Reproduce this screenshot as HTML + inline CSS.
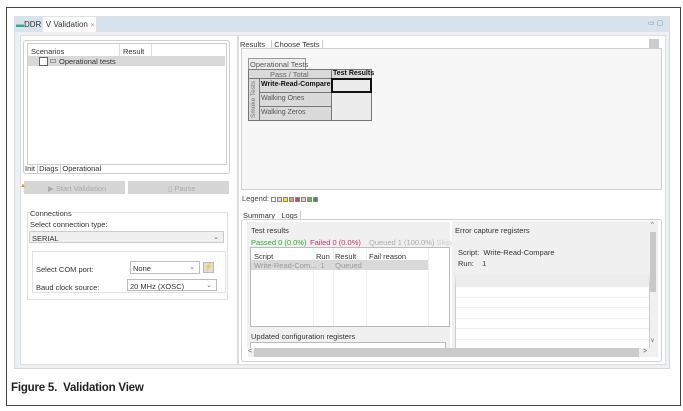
<!DOCTYPE html>
<html><head><meta charset="utf-8"><style>
*{margin:0;padding:0;box-sizing:border-box}
body{width:683px;height:411px;background:#fff;font-family:"Liberation Sans",sans-serif;font-size:7.5px;color:#333;position:relative;overflow:hidden}
div,span{position:absolute}
.b{border:1px solid #cfcfcf}
.t{white-space:nowrap}
.combo{background:#fff;border:1px solid #bdbdbd}
.arr{right:4px;top:1px;font-size:7px;color:#666}
.sq{position:static;display:inline-block;width:5px;height:5px;border:1px solid #888;margin-right:1px;vertical-align:middle}
</style></head><body>
<div style="left:6px;top:7px;width:675px;height:399px;border:1.5px solid #444"></div>
<div style="left:14px;top:16px;width:656px;height:353px;background:#eef1f4;border:1px solid #d8d8d8"></div>
<div style="left:14px;top:16px;width:656px;height:16px;background:#d9e3ee"></div>
<div style="left:43px;top:17px;width:53px;height:15px;background:#fff"></div>
<div class="t" style="left:16px;top:20px;font-size:8px;color:#333"><span style="position:static;color:#3a8;">▬</span>DDR&nbsp;&nbsp;V Validation <span style="position:static;color:#999;font-size:6px">✕</span></div>
<div class="t" style="left:648px;top:19px;color:#888;font-size:7px">▭ ▢</div>
<!-- left panel -->
<div style="left:20px;top:35px;width:218px;height:330px;background:#fff;border:1px solid #ddd"></div>
<div class="b" style="left:23px;top:40px;width:207px;height:134px;border-radius:3px;background:#fff"></div>
<div class="b" style="left:27px;top:43px;width:200px;height:122px;background:#fff"></div>
<div style="left:119px;top:44px;width:1px;height:12px;background:#ddd"></div>
<div style="left:151px;top:44px;width:1px;height:12px;background:#ddd"></div>
<div class="t" style="left:31px;top:47px">Scenarios</div>
<div class="t" style="left:123px;top:47px">Result</div>
<div style="left:28px;top:56px;width:197px;height:10px;background:#d9d9d9"></div>
<div style="left:39px;top:57px;width:9px;height:9px;background:#fff;border:1px solid #666"></div>
<div style="left:50px;top:59px;width:6px;height:4px;border:1px solid #999"></div>
<div class="t" style="left:59px;top:57px">Operational tests</div>
<div class="t" style="left:25px;top:164px;font-size:7.5px">Init <span style="position:static;border-left:1px solid #ccc;padding-left:1px">Diags</span> <span style="position:static;border-left:1px solid #ccc;padding-left:1px">Operational</span></div>
<div style="left:24px;top:181px;width:101px;height:13px;background:#d6d6d6"></div>
<div style="left:128px;top:181px;width:101px;height:13px;background:#d6d6d6"></div>
<div class="t" style="left:20px;top:183px;color:#d49a2a;font-size:6px">▲</div>
<div class="t" style="left:48px;top:184px;color:#aaa">▶ Start Validation</div>
<div class="t" style="left:168px;top:184px;color:#aaa">▯ Pause</div>
<div style="left:27px;top:212px;width:201px;height:88px;border:1px solid #e2e2e2"></div>
<div class="t" style="left:30px;top:209px;background:#fff">Connections</div>
<div class="t" style="left:30px;top:220px">Select connection type:</div>
<div style="left:29px;top:231px;width:195px;height:12px;background:#f0f0f0;border:1px solid #ccc"><span class="t" style="left:2px;top:2px">SERIAL</span><span class="arr">⌄</span></div>
<div style="left:32px;top:251px;width:194px;height:42px;border:1px solid #e2e2e2"></div>
<div class="t" style="left:36px;top:265px">Select COM port:</div>
<div class="combo" style="left:130px;top:261px;width:70px;height:13px"><span class="t" style="left:2px;top:2px">None</span><span class="arr">⌄</span></div>
<div style="left:203px;top:262px;width:11px;height:11px;background:#ddd;border:1px solid #bbb;color:#c9a000;font-size:7px;text-align:center">⚡</div>
<div class="t" style="left:36px;top:283px">Baud clock source:</div>
<div class="combo" style="left:127px;top:279px;width:90px;height:12px"><span class="t" style="left:2px;top:2px">20 MHz (XOSC)</span><span class="arr">⌄</span></div>
<!-- right panel -->
<div style="left:238px;top:35px;width:428px;height:330px;background:#fff;border:1px solid #ddd"></div>
<div class="t" style="left:240px;top:40px;font-size:7.5px">Results&nbsp;&nbsp;&nbsp;<span style="position:static;border-left:1px solid #ccc;padding-left:2px;border-right:1px solid #ccc;padding-right:2px">Choose Tests</span></div>
<div class="b" style="left:241px;top:48px;width:421px;height:142px;background:#f7f7f7"></div>
<div style="left:649px;top:39px;width:10px;height:9px;background:#ccc"></div>
<div style="left:248px;top:58px;width:58px;height:11px;background:#ececec;border:1px solid #999;border-bottom:none"></div>
<div class="t" style="left:250px;top:60px;color:#555">Operational Tests</div>
<div style="left:248px;top:69px;width:124px;height:52px;background:#dadada;border:1px solid #777"></div>
<div style="left:248px;top:78px;width:124px;height:1px;background:#777"></div>
<div style="left:331px;top:69px;width:1px;height:52px;background:#777"></div>
<div style="left:259px;top:78px;width:1px;height:43px;background:#777"></div>
<div style="left:259px;top:92px;width:113px;height:1px;background:#777"></div>
<div style="left:259px;top:106px;width:113px;height:1px;background:#777"></div>
<div style="left:332px;top:79px;width:39px;height:41px;background:#ececec"></div>
<div style="left:331px;top:78px;width:41px;height:15px;border:2px solid #111"></div>
<div class="t" style="left:270px;top:70px;color:#666">Pass / Total</div>
<div class="t" style="left:333px;top:70px;font-weight:bold;color:#111;font-size:7px">Test Results</div>
<div class="t" style="left:261px;top:81px;font-weight:bold;color:#111;font-size:7px">Write-Read-Compare</div>
<div class="t" style="left:261px;top:95px;color:#555;font-size:7px">Walking Ones</div>
<div class="t" style="left:261px;top:109px;color:#555;font-size:7px">Walking Zeros</div>
<div class="t" style="left:250px;top:118px;transform:rotate(-90deg);transform-origin:0 0;color:#777;font-size:6.5px">Smoke Tests</div>
<div class="t" style="left:242px;top:194px;color:#444">Legend: <span class="sq" style="background:#fff"></span><span class="sq" style="background:#ddd"></span><span class="sq" style="background:#ee0"></span><span class="sq" style="background:#e96"></span><span class="sq" style="background:#d44"></span><span class="sq" style="background:#cdc"></span><span class="sq" style="background:#5c3"></span><span class="sq" style="background:#585"></span></div>
<div class="t" style="left:243px;top:211px">Summary&nbsp;&nbsp;&nbsp;<span style="position:static;border-right:1px solid #ccc;padding-right:2px">Logs</span></div>
<div class="b" style="left:241px;top:219px;width:421px;height:143px;border-radius:3px;background:#fff"></div>
<div style="left:247px;top:222px;width:203px;height:126px;background:#f0f0f0"></div>
<div class="t" style="left:251px;top:226px">Test results</div>
<div class="t" style="left:251px;top:238px;color:#3a3">Passed 0 (0.0%)</div>
<div class="t" style="left:310px;top:238px;color:#c36">Failed 0 (0.0%)</div>
<div class="t" style="left:369px;top:238px;color:#aaa">Queued 1 (100.0%) <span style="position:static;color:#ccc">Skipp</span></div>
<div style="left:250px;top:247px;width:200px;height:80px;background:#fff;border:1px solid #bbb"></div>
<div style="left:313px;top:248px;width:1px;height:78px;background:#eee"></div>
<div style="left:333px;top:248px;width:1px;height:78px;background:#eee"></div>
<div style="left:366px;top:248px;width:1px;height:78px;background:#eee"></div>
<div style="left:428px;top:248px;width:1px;height:78px;background:#eee"></div>
<div class="t" style="left:254px;top:252px">Script</div>
<div class="t" style="left:316px;top:252px">Run</div>
<div class="t" style="left:335px;top:252px">Result</div>
<div class="t" style="left:369px;top:252px">Fail reason</div>
<div style="left:251px;top:260px;width:177px;height:10px;background:#d9d9d9"></div>
<div class="t" style="left:254px;top:261px;color:#999">Write-Read-Com...&nbsp;&nbsp;1&nbsp;&nbsp;&nbsp;&nbsp;&nbsp;Queued</div>
<div class="t" style="left:251px;top:332px">Updated configuration registers</div>
<div style="left:250px;top:342px;width:196px;height:8px;background:#fff;border:1px solid #bbb"></div>
<div style="left:452px;top:221px;width:206px;height:136px;background:#f0f0f0"></div>
<div class="t" style="left:455px;top:226px">Error capture registers</div>
<div class="t" style="left:458px;top:248px">Script:&nbsp; Write-Read-Compare</div>
<div class="t" style="left:458px;top:259px">Run:&nbsp;&nbsp;&nbsp; 1</div>
<div style="left:455px;top:274px;width:195px;height:75px;background:#fff;border:1px solid #ccc;border-top:13px solid #ececec"></div>
<div style="left:456px;top:297px;width:193px;height:1px;background:#eee"></div>
<div style="left:456px;top:307px;width:193px;height:1px;background:#eee"></div>
<div style="left:456px;top:318px;width:193px;height:1px;background:#eee"></div>
<div style="left:456px;top:328px;width:193px;height:1px;background:#eee"></div>
<div style="left:456px;top:339px;width:193px;height:1px;background:#eee"></div>
<div style="left:650px;top:232px;width:6px;height:60px;background:#c8c8c8"></div>
<div class="t" style="left:651px;top:222px;color:#666;font-size:6px">^</div>
<div class="t" style="left:651px;top:338px;color:#666;font-size:6px">v</div>
<div style="left:248px;top:348px;width:403px;height:9px;background:#f0f0f0"></div>
<div style="left:254px;top:348px;width:385px;height:9px;background:#cbcbcb"></div>
<div class="t" style="left:248px;top:348px;color:#666;font-size:7px">&lt;</div>
<div class="t" style="left:643px;top:348px;color:#666;font-size:7px">&gt;</div>
<div class="t" style="left:11px;top:382px;font-size:11.5px;font-weight:bold;color:#222;letter-spacing:-0.2px">Figure 5.&nbsp; Validation View</div>
</body></html>
